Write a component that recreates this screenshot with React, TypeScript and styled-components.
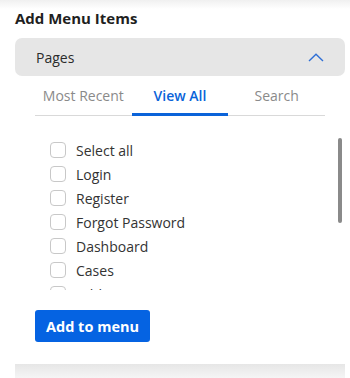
import * as React from 'react';
import styled, { createGlobalStyle } from 'styled-components';

const GlobalStyle = createGlobalStyle`
  html, body {
    margin: 0;
    padding: 0;
    background: #ffffff;
    font-family: "Open Sans", "Noto Sans", sans-serif;
  }
`;

const StyledPage = styled.div`
  width: 350px;
  height: 378px;
  overflow: hidden;
  background: linear-gradient(#f0f0f0 0px, #ffffff 9px);
  padding: 0 5px 0 15px;
  box-sizing: border-box;
  display: flex;
  flex-direction: column;
`;

const StyledTitle = styled.h2`
  margin: 0;
  padding-top: 8px;
  height: 38px;
  box-sizing: border-box;
  flex-shrink: 0;
  font-size: 15px;
  font-weight: 700;
  line-height: 20px;
  color: #1f1f1f;
`;

const StyledPanel = styled.div`
  display: flex;
  flex-direction: column;
  background: #ffffff;
  height: 326px;
  flex-shrink: 0;
`;

const StyledAccordionHead = styled.button`
  height: 38px;
  width: 100%;
  border: 0;
  border-radius: 7px;
  background: #e6e6e6;
  display: flex;
  align-items: center;
  justify-content: space-between;
  padding: 0 21px 0 21px;
  font-family: inherit;
  font-size: 14px;
  color: #2b2b2b;
  cursor: pointer;
`;

const StyledBody = styled.div`
  padding: 8px 20px 0 20px;
  display: flex;
  flex-direction: column;
`;

const StyledTabs = styled.div`
  display: grid;
  grid-template-columns: 1fr 1fr 1fr;
  border-bottom: 1px solid #d9d9d9;
  height: 31px;
`;

const StyledTab = styled.div<{ $active?: boolean }>`
  display: flex;
  align-items: center;
  justify-content: center;
  font-size: 14px;
  color: ${p => (p.$active ? '#0a63d9' : '#8a8a8a')};
  font-weight: ${p => (p.$active ? 600 : 400)};
  border-bottom: 3px solid ${p => (p.$active ? '#0a63d9' : 'transparent')};
  margin-bottom: -1px;
  padding-bottom: 7px;
  cursor: pointer;
`;

const StyledListWrap = styled.div`
  position: relative;
  margin-top: 22px;
  margin-right: -20px;
  height: 152px;
`;

const StyledList = styled.div`
  height: 100%;
  overflow-y: auto;
  padding-left: 15px;
  scrollbar-width: none;

  &::-webkit-scrollbar {
    display: none;
  }
`;

const StyledThumb = styled.div`
  position: absolute;
  right: 3px;
  width: 4px;
  border-radius: 2px;
  background: #8a8a8a;
`;

const StyledRow = styled.label`
  display: flex;
  align-items: center;
  height: 24px;
  gap: 10px;
  font-size: 14px;
  color: #333333;
`;

const StyledBox = styled.span`
  width: 16px;
  height: 16px;
  border: 1px solid #c8c8c8;
  border-radius: 4px;
  box-sizing: border-box;
  background: #ffffff;
  flex-shrink: 0;
`;

const StyledButton = styled.button`
  margin-top: 20px;
  align-self: flex-start;
  height: 32px;
  padding: 0 11px;
  border: 0;
  border-radius: 3px;
  background: #0563e2;
  color: #ffffff;
  font-family: inherit;
  font-size: 14.5px;
  font-weight: 700;
  cursor: pointer;
`;

const StyledFooterShade = styled.div`
  height: 16px;
  flex-shrink: 0;
  background: linear-gradient(#e6e6e6, #f7f7f7);
`;

const pages = [
  'Select all',
  'Login',
  'Register',
  'Forgot Password',
  'Dashboard',
  'Cases',
  'Add Case',
  'Case Details',
  'Profile',
  'Settings',
  'Logout',
];

export default function App() {
  const [tab, setTab] = React.useState('View All');
  const [scroll, setScroll] = React.useState({ top: 0, height: 272, client: 152 });
  const thumbHeight = (scroll.client * scroll.client) / scroll.height;
  const thumbTop = (scroll.top / scroll.height) * scroll.client;
  return (
    <React.Fragment>
      <GlobalStyle />
      <StyledPage>
        <StyledTitle>Add Menu Items</StyledTitle>
        <StyledPanel>
          <StyledAccordionHead>
            <span>Pages</span>
            <svg width="16" height="9" viewBox="0 0 16 9" fill="none">
              <path d="M1 8L8 1.2L15 8" stroke="#2f6fd6" strokeWidth="1.4" />
            </svg>
          </StyledAccordionHead>
          <StyledBody>
            <StyledTabs>
              {['Most Recent', 'View All', 'Search'].map(t => (
                <StyledTab key={t} $active={t === tab} onClick={() => setTab(t)}>
                  {t}
                </StyledTab>
              ))}
            </StyledTabs>
            <StyledListWrap>
              <StyledList
                onScroll={e => {
                  const el = e.currentTarget;
                  setScroll({ top: el.scrollTop, height: el.scrollHeight, client: el.clientHeight });
                }}
              >
                {pages.map(p => (
                  <StyledRow key={p}>
                    <StyledBox />
                    {p}
                  </StyledRow>
                ))}
                <div style={{ height: 8 }} />
              </StyledList>
              <StyledThumb style={{ top: thumbTop, height: thumbHeight }} />
            </StyledListWrap>
            <StyledButton>Add to menu</StyledButton>
          </StyledBody>
        </StyledPanel>
        <StyledFooterShade />
      </StyledPage>
    </React.Fragment>
  );
}
